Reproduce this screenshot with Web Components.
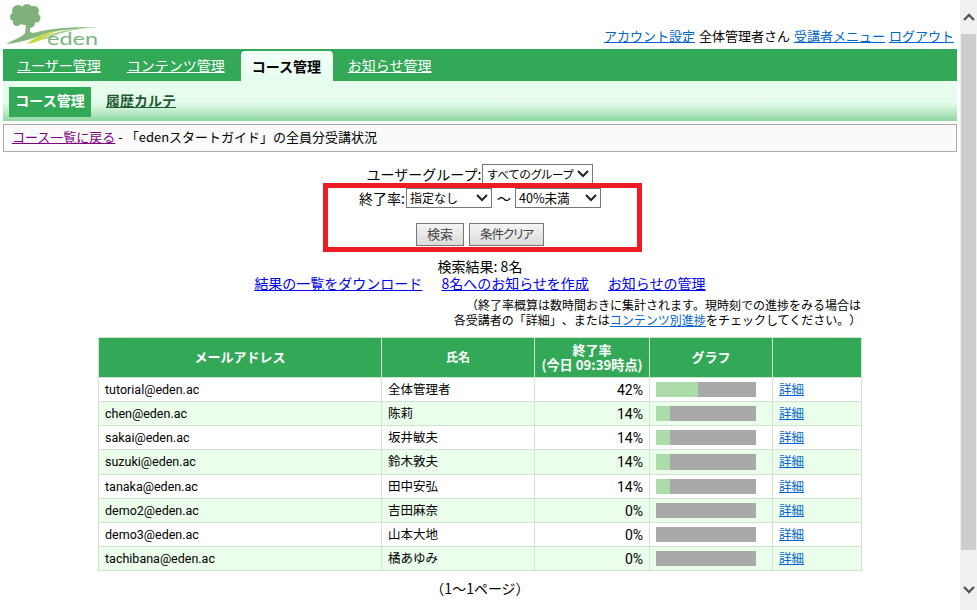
<!DOCTYPE html>
<html lang="ja"><head><meta charset="utf-8"><title>eden</title>
<style>
html,body{margin:0;height:610px;overflow:hidden;background:#fff}
body{font:13px/1.2 "Noto Sans CJK JP","Noto Sans",sans-serif;color:#000;text-spacing-trim:space-all}
</style></head><body>
<app-shell>
  <site-header></site-header>
  <main-tabs></main-tabs>
  <sub-tabs></sub-tabs>
  <crumb-box></crumb-box>
  <search-panel></search-panel>
  <result-links></result-links>
  <result-table></result-table>
  <page-foot></page-foot>
</app-shell>
<script>
const FONT='"Noto Sans CJK JP","Noto Sans",sans-serif';
function def(name,html,extra){customElements.define(name,class extends HTMLElement{constructor(){super();this.attachShadow({mode:'open'}).innerHTML=html;}connectedCallback(){if(extra)extra(this);}});}
const chev='<svg width="12" height="8" viewBox="0 0 12 8"><path d="M1 1l5 5 5-5" fill="none" stroke="#222" stroke-width="2"/></svg>';

def('app-shell',`<style>
:host{display:flex;width:977px;height:610px;overflow:hidden}
.page{width:960px;flex:none;height:610px;overflow:hidden}
.bar{width:17px;flex:none;height:610px;background:#f0f0f0;display:flex;flex-direction:column;align-items:center}
.arr{height:34px;flex:none;display:flex;align-items:center;justify-content:center}
.arr.b{height:60px}
.thumb{width:15px;flex:1;background:#cdcdcd}
svg{display:block}
</style><div class="page"><slot></slot></div>
<div class="bar"><div class="arr"><svg width="12" height="8" viewBox="0 0 12 8"><path d="M1 7L6 2l5 5" fill="none" stroke="#555" stroke-width="2.4"/></svg></div><div class="thumb"></div><div class="arr b"><svg width="12" height="8" viewBox="0 0 12 8" style="margin-top:19px"><path d="M1 1l5 5 5-5" fill="none" stroke="#555" stroke-width="2.4"/></svg></div></div>`);

def('site-header',`<style>
:host{display:flex;height:49px;justify-content:space-between;align-items:flex-end;font-size:13px;line-height:20px}
svg{display:block}
nav{display:flex;gap:4px;padding:0 6px 3px 0;white-space:nowrap}
a{color:#0066cc}
text{font-family:"Lato","Noto Sans",sans-serif;font-weight:400}
</style>
<svg width="110" height="49" viewBox="0 0 110 49">
<path d="M6 44C15 39 22 37 25 33L26 25h4l0 7 3 1C52 28 78 26 99 28 78 28 60 30 47 33 35 38 20 43 6 44z" fill="#86b67f"/>
<path d="M27 44C33 38 44 33 60 30 51 33 46 36 41 40 37 42 32 43 27 44z" fill="#c6d63c"/>
<path d="M41 40C48 34 62 30 85 28 68 31 56 34 49 38z" fill="#a9cf92"/>
<g fill="#7fb27a"><circle cx="27" cy="10" r="6"/><circle cx="34" cy="11" r="5"/><circle cx="18" cy="11" r="6"/><circle cx="36" cy="18" r="4.5"/><circle cx="14" cy="17" r="4"/><circle cx="17" cy="22" r="4"/><circle cx="25" cy="17" r="8"/><circle cx="30" cy="23" r="5"/></g>
<text x="47" y="45" font-size="18" fill="#7ab57f" textLength="51" lengthAdjust="spacingAndGlyphs">eden</text>
</svg>
<nav><a href="#">アカウント設定</a><span>全体管理者さん</span><a href="#">受講者メニュー</a><a href="#">ログアウト</a></nav>`);

def('main-tabs',`<style>
:host{display:flex;margin:0 3px;height:32px;background:#33a957;font-size:14px;padding-left:14px;align-items:flex-end}
a{color:#fff;height:32px;line-height:32px;white-space:nowrap;margin-right:26px}
a.on{background:linear-gradient(#f4fff8,#e6fdee);color:#000;font-weight:700;text-decoration:none;border-radius:4px 4px 0 0;height:30px;line-height:30px;padding:0 11px;margin:0 15px 0 -10px;width:70px}
</style>
<a href="#">ユーザー管理</a><a href="#">コンテンツ管理</a><a href="#" class="on">コース管理</a><a href="#">お知らせ管理</a>`);

def('sub-tabs',`<style>
:host{display:flex;margin:0 3px;height:40px;box-sizing:border-box;padding:6px 0 0 6px;gap:15px;font-size:14px;font-weight:700;background:linear-gradient(#e6fdee 0,#e6fdee 20px,#d0f2d9 27px,#93d9a4 39px,#93d9a4 40px)}
.on{background:#33a957;color:#fff;width:82px;height:30px;line-height:27px;text-align:center}
a{color:#1f5c34;line-height:27px;height:27px}
</style><div class="on">コース管理</div><a href="#">履歴カルテ</a>`);

def('crumb-box',`<style>
:host{display:block;margin:3px 3px 0;height:28px;box-sizing:border-box;border:1px solid #aaa;background:#fafafa;padding:0 8px;line-height:24px;font-size:13px}
a{color:#800080}
</style><a href="#">コース一覧に戻る</a> - 「edenスタートガイド」の全員分受講状況`);

def('search-panel',`<style>
:host{display:block;position:relative;text-align:center;font-size:14px;margin-top:11px;height:94px}
.row{display:flex;justify-content:center;align-items:center;height:22px;white-space:nowrap;line-height:20px}
.row.two{height:26px}
.row.three{margin-top:12px;height:23px;gap:5px}
.sel{box-sizing:border-box;height:20px;border:1px solid #777;background:#fff;font:12px/18px ${FONT};display:inline-flex;justify-content:space-between;align-items:center;padding:0 3px;color:#000}
.palt{font-feature-settings:"palt";font-size:11.7px;margin-left:1px;padding-left:4px}
.wide{font-size:12.6px}
.tilde{margin:0 4px 0 5px}
button{font:13px/20px ${FONT};font-feature-settings:"palt";height:23px;border:1px solid #777;background:linear-gradient(#f4f4f4,#dcdcdc);padding:0 0 1px;color:#444}
.tight{font-size:12.5px;letter-spacing:-1px}
.mark{position:absolute;left:323px;top:20px;width:319px;height:69px;box-sizing:border-box;border:5px solid #ed1c24;pointer-events:none}
</style>
<div class="row">ユーザーグループ:<span class="sel palt" style="width:111px">すべてのグループ${chev}</span></div>
<div class="row two">終了率:<span class="sel" style="width:86px;margin-left:1px">指定なし${chev}</span><span class="tilde">〜</span><span class="sel wide" style="width:86px">40%未満${chev}</span></div>
<div class="row three"><button style="width:48px">検索</button><button class="tight" style="width:75px">条件クリア</button></div>
<div class="mark"></div>`);

def('result-links',`<style>
:host{display:block;text-align:center;font-size:14px}
.c{line-height:18px;height:17px}
.l{line-height:19px;height:19px;display:flex;justify-content:center;gap:19px}
.l a{color:#0000ee}
.n{font-size:12px;line-height:15px;margin-top:4px;padding-left:367px;height:30px;white-space:nowrap}
.n div{padding-right:12px}
.n a{color:#0066cc}
</style>
<div class="c">検索結果: 8名</div>
<div class="l"><a href="#">結果の一覧をダウンロード</a><a href="#">8名へのお知らせを作成</a><a href="#">お知らせの管理</a></div>
<div class="n">（終了率概算は数時間おきに集計されます。現時刻での進捗をみる場合は<div>各受講者の「詳細」、または<a href="#">コンテンツ別進捗</a>をチェックしてください。）</div></div>`);

def('progress-bar',`<style>
:host{display:block;width:100px;height:15px;background:#a9a9a9}
:host([tall]){height:16px}
i{display:block;height:100%;background:#addcab}
</style><i></i>`,el=>{el.shadowRoot.querySelector('i').style.width=el.getAttribute('v')+'%';});

const rows=[['tutorial@eden.ac','全体管理者',42],['chen@eden.ac','陈莉',14],['sakai@eden.ac','坂井敏夫',14],['suzuki@eden.ac','鈴木敦夫',14],['tanaka@eden.ac','田中安弘',14],['demo2@eden.ac','吉田麻奈',0],['demo3@eden.ac','山本大地',0],['tachibana@eden.ac','橘あゆみ',0]];
def('result-table',`<style>
:host{display:block;margin:10px 0 0 98px;width:763px}
table{border-collapse:collapse;table-layout:fixed;width:763px;font:12.5px Roboto,"Noto Sans CJK JP",sans-serif}
th{background:#33a957;color:#fff;height:37px;padding:0 0 2px;border:1px solid #cfe3d0;font:700 13px/15px ${FONT}}
th.s{font-size:12px}
th span{font-size:13.2px}
td{height:23px;padding:0 6px;border:1px solid #cfe3d0;line-height:20px;white-space:nowrap}
tr:nth-child(even) td{background:#ebfdeb}
tr:nth-child(4) td{height:24px}
.r{text-align:right;font-size:14px}
a{color:#0066cc}
</style><table><colgroup><col style="width:283px"><col style="width:153px"><col style="width:115px"><col style="width:123px"><col style="width:89px"></colgroup>
<thead><tr><th>メールアドレス</th><th class="s">氏名</th><th>終了率<br><span>(今日 09:39時点)</span></th><th>グラフ</th><th></th></tr></thead>
<tbody>${rows.map((r,i)=>`<tr><td>${r[0]}</td><td>${r[1]}</td><td class="r">${r[2]}%</td><td><progress-bar v="${r[2]}"${i==3?' tall':''}></progress-bar></td><td><a href="#">詳細</a></td></tr>`).join('')}</tbody></table>`);

def('page-foot',`<style>:host{display:block;text-align:center;font-size:14px;margin-top:8px;line-height:18px}</style>（1〜1ページ）`);
</script>
</body></html>
